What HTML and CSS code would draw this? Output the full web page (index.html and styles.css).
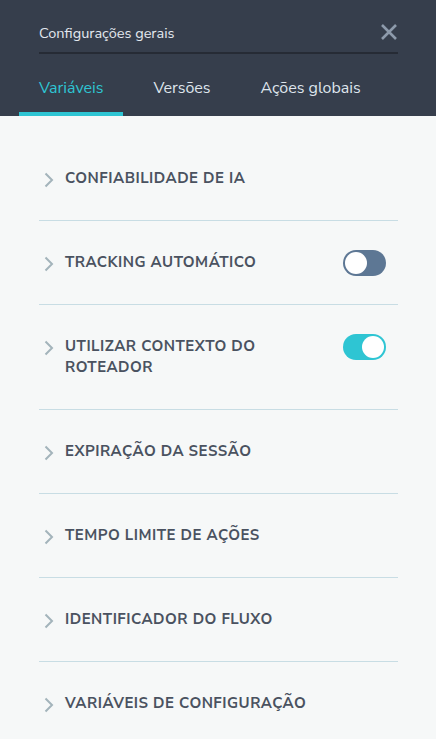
FILE: index.html
```html
<!DOCTYPE html>
<html lang="pt-BR">
<head>
<meta charset="utf-8">
<title>Configurações gerais</title>
<link rel="stylesheet" href="styles.css">
</head>
<body>
<div class="panel">
  <header class="header">
    <div class="title-row">
      <span class="title">Configurações gerais</span>
      <svg class="close" width="18" height="18" viewBox="0 0 18 18"><path d="M2 2 L16 16 M16 2 L2 16" stroke="#8d9aab" stroke-width="2.6" stroke-linecap="butt" fill="none"/></svg>
    </div>
    <nav class="tabs">
      <a class="tab active">Variáveis</a>
      <a class="tab">Versões</a>
      <a class="tab">Ações globais</a>
    </nav>
  </header>
  <main class="content">
    <div class="row">
      <svg class="chev" width="10" height="16" viewBox="0 0 10 16"><path d="M1.5 1.5 L8 8 L1.5 14.5" stroke="#a3b4bb" stroke-width="2" fill="none"/></svg>
      <span class="label">CONFIABILIDADE DE IA</span>
    </div>
    <div class="row">
      <svg class="chev" width="10" height="16" viewBox="0 0 10 16"><path d="M1.5 1.5 L8 8 L1.5 14.5" stroke="#a3b4bb" stroke-width="2" fill="none"/></svg>
      <span class="label">TRACKING AUTOMÁTICO</span>
      <span class="toggle"><span class="knob"></span></span>
    </div>
    <div class="row">
      <svg class="chev" width="10" height="16" viewBox="0 0 10 16"><path d="M1.5 1.5 L8 8 L1.5 14.5" stroke="#a3b4bb" stroke-width="2" fill="none"/></svg>
      <span class="label">UTILIZAR CONTEXTO DO<br>ROTEADOR</span>
      <span class="toggle on"><span class="knob"></span></span>
    </div>
    <div class="row">
      <svg class="chev" width="10" height="16" viewBox="0 0 10 16"><path d="M1.5 1.5 L8 8 L1.5 14.5" stroke="#a3b4bb" stroke-width="2" fill="none"/></svg>
      <span class="label">EXPIRAÇÃO DA SESSÃO</span>
    </div>
    <div class="row">
      <svg class="chev" width="10" height="16" viewBox="0 0 10 16"><path d="M1.5 1.5 L8 8 L1.5 14.5" stroke="#a3b4bb" stroke-width="2" fill="none"/></svg>
      <span class="label">TEMPO LIMITE DE AÇÕES</span>
    </div>
    <div class="row">
      <svg class="chev" width="10" height="16" viewBox="0 0 10 16"><path d="M1.5 1.5 L8 8 L1.5 14.5" stroke="#a3b4bb" stroke-width="2" fill="none"/></svg>
      <span class="label">IDENTIFICADOR DO FLUXO</span>
    </div>
    <div class="row">
      <svg class="chev" width="10" height="16" viewBox="0 0 10 16"><path d="M1.5 1.5 L8 8 L1.5 14.5" stroke="#a3b4bb" stroke-width="2" fill="none"/></svg>
      <span class="label">VARIÁVEIS DE CONFIGURAÇÃO</span>
    </div>
  </main>
</div>
</body>
</html>
```
FILE: styles.css
```css
* { box-sizing: border-box; }
html, body { margin: 0; padding: 0; }
body {
  background: #f6f8f8;
  font-family: "Nunito Sans", Lato, "Open Sans", sans-serif;
  width: 436px;
  height: 739px;
  overflow: hidden;
}
.header {
  background: #363e4c;
  height: 116px;
  padding: 0 38px 0 19px;
  display: flex;
  flex-direction: column;
}
.title-row {
  margin: 0 0 0 20px;
  height: 54px;
  padding-top: 21px;
  border-bottom: 2px solid #262b35;
  display: flex;
  align-items: flex-start;
  justify-content: space-between;
}
.title {
  color: #e3e8ef;
  font-size: 14.5px;
  line-height: 24px;
}
.close { margin-top: 2px; margin-right: 0; }
.tabs {
  display: flex;
  margin-top: auto;
}
.tab {
  color: #dfe5ec;
  font-size: 16px;
  line-height: 20px;
  padding: 0 20px 14px;
  border-bottom: 4px solid transparent;
  margin-right: 10px;
}
.tab:last-child { margin-right: 0; }
.tab.active {
  color: #2ec5d3;
  border-bottom-color: #2ec5d3;
}
.content {
  padding: 21px 38px 0 39px;
}
.row {
  display: flex;
  align-items: flex-start;
  padding: 31px 0;
  border-bottom: 1px solid #c8dde4;
}
.row:last-child { border-bottom: none; }
.chev {
  flex: none;
  margin: 4px 0 0 5px;
}
.label {
  flex: 1;
  margin-left: 11px;
  color: #4a5260;
  font-weight: 700;
  font-size: 15px;
  line-height: 21px;
  letter-spacing: 0.5px;
}
.toggle {
  flex: none;
  width: 43px;
  height: 26px;
  border-radius: 13px;
  background: #5d7794;
  position: relative;
  margin: -2px 12px -3px 0;
}
.toggle .knob {
  position: absolute;
  left: 2px;
  top: 2px;
  width: 22px;
  height: 22px;
  border-radius: 50%;
  background: #fff;
}
.toggle.on { background: #2ec5d3; }
.toggle.on .knob { left: 19px; }
```
